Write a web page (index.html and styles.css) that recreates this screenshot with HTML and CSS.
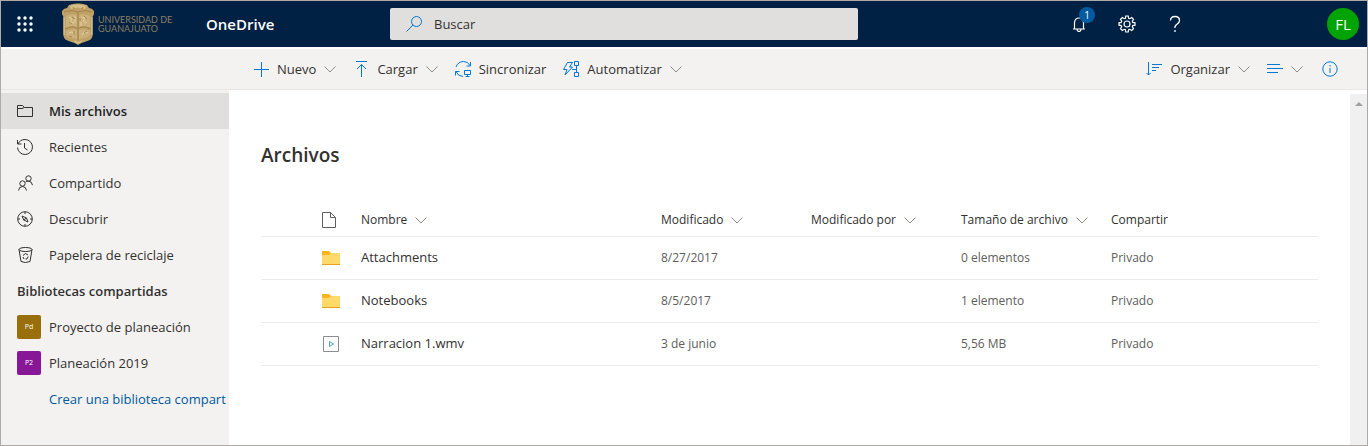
FILE: index.html
```
<!DOCTYPE html>
<html lang="es">
<head>
    <meta charset="UTF-8">
    <title>Mis archivos - OneDrive</title>
    <link rel="stylesheet" href="styles.css">
</head>
<body>
    <!-- shared shapes -->
    <svg class="defs" width="0" height="0">
        <symbol id="chevron" viewBox="0 0 12 12"><path d="M.5 3.500 6 9l5.500-5.500"/></symbol>
        <symbol id="folder" viewBox="0 0 18 14">
            <path fill="#ffd969" d="M0 2h18v12H0z"/>
            <path fill="#ffb41f" d="M0 0h7l2 2-2 2H0z"/>
            <path fill="#e8a21c" d="M0 13h18v1H0z"/>
        </symbol>
    </svg>

    <header class="topbar">
        <div class="brand">
            <button type="button" class="waffle" aria-label="Aplicaciones">
                <svg width="16" height="16" viewBox="0 0 16 16" fill="#fff">
                    <circle cx="2" cy="2" r="1.700"/><circle cx="8" cy="2" r="1.700"/><circle cx="14" cy="2" r="1.700"/>
                    <circle cx="2" cy="8" r="1.700"/><circle cx="8" cy="8" r="1.700"/><circle cx="14" cy="8" r="1.700"/>
                    <circle cx="2" cy="14" r="1.700"/><circle cx="8" cy="14" r="1.700"/><circle cx="14" cy="14" r="1.700"/>
                </svg>
            </button>
            <svg class="crest" width="34" height="42" viewBox="0 0 34 42">
                <path fill="#bfa167" d="M8 2Q13 0 17 .5Q21 0 26 2L28 5Q34 6 33 11L31.500 14V33Q31 37 25 38.500Q20 39.500 17 42Q14 39.500 9 38.500Q3 37 2.500 33V14L1 11Q0 6 6 5Z"/>
                <path fill="#d8c08a" d="M9 3Q17 0 25 3L24 6Q17 3 10 6Z"/>
                <path fill="#cbb07a" d="M5 13Q11 10 16 12V24Q10 22 5 25ZM18 12Q23 10 29 13V25Q24 22 18 24ZM5 28Q11 25 16 27V36L11 35Q5 34 5 31ZM18 27Q23 25 29 28V31Q29 34 23 35L18 36Z"/>
                <path fill="none" stroke="#a1834c" d="M3 9Q10 6 17 9Q24 6 31 9M17 9V37M4 26Q11 22 17 25.500Q23 22 30 26"/>
                <path fill="none" stroke="#e3d09f" d="M8 14l3 2-2 3 4 1M20 14l4 1-2 3 4 2M8 30l3-1 2 3M21 32l2-3 4 1M14 13v7M20 19v4M3 14v18M31 14v18M13 38l4 2 4-2"/>
                <path fill="none" stroke="#a3864f" d="M11 14l3 2M23 13l3 3M8 19l3 2M13 28v4M26 28l-3 2M8 33l3 1M12 4l1 2M22 4l-1 2M19 15v3"/>
            </svg>
            <span class="school">UNIVERSIDAD DE<br>GUANAJUATO</span>
            <span class="app-name">OneDrive</span>
        </div>
        <label class="search">
            <svg width="16" height="16" viewBox="0 0 16 16" fill="none" stroke="#0078d4"><circle cx="10.500" cy="5.500" r="5"/><path d="M7 9 .5 15.500"/></svg>
            <input type="search" placeholder="Buscar" aria-label="Buscar">
        </label>
        <div class="tools">
            <button type="button" class="tool" aria-label="Notificaciones">
                <svg width="16" height="16" viewBox="0 0 16 16" fill="none" stroke="#fff" stroke-width="1.200"><path d="M2 13h12M3.500 13V6.500Q4 2 8 2t4.500 4.500V13M6 13.500Q6.500 15.500 8 15.500t2-2"/></svg>
                <span class="badge">1</span>
            </button>
            <button type="button" class="tool" aria-label="Configuración">
                <svg width="18" height="18" viewBox="0 0 18 18" fill="none" stroke="#fff" stroke-width="1.200"><circle cx="9" cy="9" r="3"/><path d="M7.800 1h2.400l.4 2.200 1.200.5L13.700 2.500l1.800 1.800-1.200 1.900.5 1.200 2.200.4v2.400l-2.200.4-.5 1.200 1.200 1.900-1.800 1.800-1.900-1.200-1.200.5-.4 2.200H7.800l-.4-2.200-1.200-.5-1.900 1.200-1.800-1.800 1.200-1.900-.5-1.200L1 10.200V7.800l2.200-.4.5-1.200-1.200-1.900 1.800-1.800 1.900 1.200 1.200-.5z"/></svg>
            </button>
            <button type="button" class="tool" aria-label="Ayuda">
                <svg width="16" height="18" viewBox="0 0 16 18" fill="none" stroke="#fff" stroke-width="1.300"><path d="M3.500 5.500Q3.500 1.500 8 1.500t4.500 4Q12.500 7.500 10 9.200T8 13"/><path d="M8 15v2"/></svg>
            </button>
            <button type="button" class="avatar">FL</button>
        </div>
    </header>

    <div class="commands">
        <button type="button" class="command">
            <svg class="icon" viewBox="0 0 16 16"><path d="M8.500 1v15M1 8.500h15"/></svg>
            Nuevo
            <svg class="chevron"><use href="#chevron"/></svg>
        </button>
        <button type="button" class="command">
            <svg class="icon" viewBox="0 0 16 16"><path d="M3 .5h11M8.500 16V3.500M4 8l4.500-4.500L13 8"/></svg>
            Cargar
            <svg class="chevron"><use href="#chevron"/></svg>
        </button>
        <button type="button" class="command">
            <svg class="icon" viewBox="0 0 16 16"><path d="M1 6Q3 .5 8.500 .5q4.500 0 6.500 4M15.500 1v4h-4M8 15.500Q2.500 15 1 10.500M.5 14.500v-4h4M9.500 9.500h6v4h-6zM12.500 13.500v2M10.500 15.500h4"/></svg>
            Sincronizar
        </button>
        <button type="button" class="command">
            <svg class="icon" viewBox="0 0 16 16"><path d="M4.500 1.500h5L6.500 6h3L2 14l2-5.500H.5zM11.500.5h4v4h-4zM11.500 11.500h4v4h-4zM13.500 4.500v7M9 8.500h4.500"/></svg>
            Automatizar
            <svg class="chevron"><use href="#chevron"/></svg>
        </button>
        <div class="views">
            <button type="button" class="command">
                <svg class="icon" viewBox="0 0 16 16"><path d="M2.500 1v13M.5 12l2 2 2-2M6 3.500h10M6 6.500h7M6 9.500h4"/></svg>
                Organizar
                <svg class="chevron"><use href="#chevron"/></svg>
            </button>
            <button type="button" class="command" aria-label="Vista">
                <svg class="icon" viewBox="0 0 16 16"><path d="M0 3.500h13M0 7.500h16M0 11.500h11"/></svg>
                <svg class="chevron"><use href="#chevron"/></svg>
            </button>
            <button type="button" class="command info" aria-label="Información">
                <svg class="icon" viewBox="0 0 16 16"><circle cx="8" cy="8" r="7.200"/><path d="M8 7v5M8 4v1.500"/></svg>
            </button>
        </div>
    </div>

    <div class="main">
        <nav class="sidebar">
            <a href="#" class="nav-item active">
                <svg class="icon" viewBox="0 0 16 16"><path d="M.5 13.500v-11h5l2 2h8v9zM.5 5.500H5l2.500-1"/></svg>
                Mis archivos
            </a>
            <a href="#" class="nav-item">
                <svg class="icon" viewBox="0 0 16 16"><path d="M1 5Q3 .5 8 .5a7.500 7.500 0 1 1-7.500 8M.5 1v4h4M7.500 4v5l3 2"/></svg>
                Recientes
            </a>
            <a href="#" class="nav-item">
                <svg class="icon" viewBox="0 0 16 16"><circle cx="11.500" cy="3.500" r="2.700"/><circle cx="5.500" cy="8.500" r="2.700"/><path d="M1.500 15.500Q2 11.500 5.500 11.500t4 4M8.500 7q1-.8 3-.8 3.500 0 4 4"/></svg>
                Compartido
            </a>
            <a href="#" class="nav-item">
                <svg class="icon" viewBox="0 0 16 16"><circle cx="8" cy="8" r="7.300"/><path d="M8 1v2M8 13v2M1 8h2M13 8h2M5 5l4.500 2L11 11 6.700 9zM6.700 9l2.800-2"/></svg>
                Descubrir
            </a>
            <a href="#" class="nav-item">
                <svg class="icon" viewBox="0 0 16 16"><ellipse cx="8.500" cy="2.500" rx="6.500" ry="2"/><path d="M2 2.500l2 12q4.500 2 9 0l2-12M6 8.500l2.500-2L11 8M11.200 9.500 10 12H8.500M6 10l1 2"/></svg>
                Papelera de reciclaje
            </a>
            <h2 class="nav-title">Bibliotecas compartidas</h2>
            <a href="#" class="nav-item library"><span class="tile gold">Pd</span>Proyecto de planeación</a>
            <a href="#" class="nav-item library"><span class="tile purple">P2</span>Planeación 2019</a>
            <a href="#" class="nav-item create">Crear una biblioteca compart</a>
        </nav>

        <main class="content">
            <h1 class="title">Archivos</h1>
            <table class="files">
                <colgroup>
                    <col class="col-icon"><col class="col-name"><col class="col-data"><col class="col-data"><col class="col-data"><col>
                </colgroup>
                <thead>
                    <tr>
                        <th><svg class="page" width="14" height="16" viewBox="0 0 14 16"><path d="M.5.5h8l5 5v10H.5zM8.500.5v5h5"/></svg></th>
                        <th>Nombre<svg class="chevron"><use href="#chevron"/></svg></th>
                        <th>Modificado<svg class="chevron"><use href="#chevron"/></svg></th>
                        <th>Modificado por<svg class="chevron"><use href="#chevron"/></svg></th>
                        <th>Tamaño de archivo<svg class="chevron"><use href="#chevron"/></svg></th>
                        <th>Compartir</th>
                    </tr>
                </thead>
                <tbody>
                    <tr>
                        <td><svg width="18" height="14"><use href="#folder"/></svg></td>
                        <td><a href="#" class="file">Attachments</a></td>
                        <td>8/27/2017</td>
                        <td></td>
                        <td>0 elementos</td>
                        <td>Privado</td>
                    </tr>
                    <tr>
                        <td><svg width="18" height="14"><use href="#folder"/></svg></td>
                        <td><a href="#" class="file">Notebooks</a></td>
                        <td>8/5/2017</td>
                        <td></td>
                        <td>1 elemento</td>
                        <td>Privado</td>
                    </tr>
                    <tr>
                        <td><svg width="18" height="16" viewBox="0 0 18 16" fill="none"><path stroke="#8a8f94" d="M1.500.5h15v15h-15z"/><path stroke="#4a9fdc" d="M7.500 5.500v5l4-2.500z"/></svg></td>
                        <td><a href="#" class="file">Narracion 1.wmv</a></td>
                        <td>3 de junio</td>
                        <td></td>
                        <td>5,56 MB</td>
                        <td>Privado</td>
                    </tr>
                </tbody>
            </table>
        </main>
        <div class="scrollbar"><svg width="8" height="4" viewBox="0 0 8 4"><path fill="#a0a0a0" d="M0 4l4-4 4 4z"/></svg></div>
    </div>
</body>
</html>
```

FILE: styles.css
```
* {
    box-sizing: border-box;
}
body {
    margin: 0;
    min-height: 100vh;
    display: flex;
    flex-direction: column;
    border: 1px solid #adaaa8;
    background-color: #ffffff;
    color: #323130;
    font-family: "Open Sans", "Noto Sans", sans-serif;
    font-size: 13px;
    line-height: 20px;
}
a {
    color: inherit;
    text-decoration: none;
}
button {
    padding: 0;
    border: 0;
    background: none;
    color: inherit;
    font: inherit;
}
svg {
    display: block;
    flex: none;
}
.defs {
    position: absolute;
}

/* top bar */
.topbar {
    display: flex;
    align-items: center;
    height: 46px;
    background-color: #002143;
    color: #ffffff;
}
.brand {
    display: flex;
    align-items: center;
    width: 389px;
    flex: none;
}
.waffle {
    width: 48px;
    height: 46px;
    display: flex;
    align-items: center;
    justify-content: center;
}
.crest {
    margin-left: 12px;
}
.school {
    width: 108px;
    margin-left: 3px;
    color: #8a7f62;
    font-family: Lato, sans-serif;
    font-size: 9px;
    line-height: 9px;
}
.app-name {
    font-size: 15px;
    font-weight: 600;
}
.search {
    display: flex;
    align-items: center;
    flex: 0 1 468px;
    height: 32px;
    padding-left: 16px;
    gap: 12px;
    border-radius: 2px;
    background-color: #e1dfdd;
}
.search input {
    flex: 1;
    min-width: 0;
    padding: 0;
    border: 0;
    outline: 0;
    background: none;
    font: inherit;
}
.search input::placeholder {
    color: #323130;
}
.tools {
    display: flex;
    align-items: center;
    margin-left: auto;
    padding-right: 8px;
}
.tool {
    position: relative;
    width: 48px;
    height: 46px;
    display: flex;
    align-items: center;
    justify-content: center;
}
.badge {
    position: absolute;
    top: 6px;
    left: 24px;
    width: 16px;
    height: 16px;
    border-radius: 50%;
    background-color: #005ba1;
    font-size: 10px;
    line-height: 16px;
    text-align: center;
}
.avatar {
    width: 32px;
    height: 32px;
    margin-left: 128px;
    border-radius: 50%;
    background-color: #00a300;
    font-size: 15px;
    text-align: center;
}

/* command bar */
.commands {
    display: flex;
    height: 41px;
    margin-top: 2px;
    padding: 0 20px 0 244px;
    border-bottom: 1px solid #eae8e6;
    background-color: #f3f2f1;
}
.command {
    display: flex;
    align-items: center;
    gap: 8px;
    padding: 0 9px 0 8px;
}
.views {
    display: flex;
    margin-left: auto;
}
.info {
    margin-left: 2px;
}
.icon {
    width: 16px;
    height: 16px;
    fill: none;
    stroke: #0078d4;
}
.chevron {
    width: 12px;
    height: 12px;
    fill: none;
    stroke: #8f8d88;
}

/* side navigation */
.main {
    display: flex;
    flex: 1;
}
.sidebar {
    width: 228px;
    flex: none;
    padding-top: 3px;
    overflow: hidden;
    background-color: #f3f2f1;
}
.nav-item {
    display: flex;
    align-items: center;
    height: 36px;
    padding-left: 16px;
    gap: 16px;
    white-space: nowrap;
}
.nav-item .icon {
    stroke: #323130;
}
.active {
    background-color: #e1dfdd;
    color: #201f1e;
    font-weight: 600;
}
.nav-title {
    margin: 0;
    padding-left: 16px;
    font-size: 13px;
    font-weight: 600;
    line-height: 36px;
}
.library {
    gap: 8px;
}
.tile {
    width: 24px;
    height: 24px;
    border-radius: 2px;
    color: #ffffff;
    font-size: 7px;
    line-height: 24px;
    text-align: center;
}
.gold {
    background-color: #986f0b;
}
.purple {
    background-color: #881798;
}
.create {
    padding-left: 48px;
    color: #005a9e;
}

/* file list */
.content {
    flex: 1;
    padding: 50px 32px 0;
}
.title {
    margin: 0;
    font-size: 19px;
    font-weight: 600;
    line-height: 30px;
}
.files {
    width: 100%;
    margin-top: 32px;
    border-collapse: collapse;
    table-layout: fixed;
    font-size: 12px;
}
.col-icon {
    width: 100px;
}
.col-name {
    width: 300px;
}
.col-data {
    width: 150px;
}
.files tr {
    border-bottom: 1px solid #edebe9;
}
.files th {
    height: 34px;
    padding: 2px 0 0;
    font-weight: 400;
    text-align: left;
    white-space: nowrap;
}
.files td {
    height: 43px;
    padding: 0;
    color: #605e5c;
}
.files th:first-child, .files td:first-child {
    padding-left: 61px;
}
.files .chevron {
    display: inline-block;
    margin-left: 8px;
    vertical-align: -2px;
}
.page {
    fill: none;
    stroke: #605e5c;
}
.files .file {
    color: #323130;
    font-size: 13px;
}
.scrollbar {
    width: 17px;
    margin-top: 4px;
    padding-top: 8px;
    background-color: #f0f0f0;
}
.scrollbar svg {
    margin: 0 auto;
}
```
